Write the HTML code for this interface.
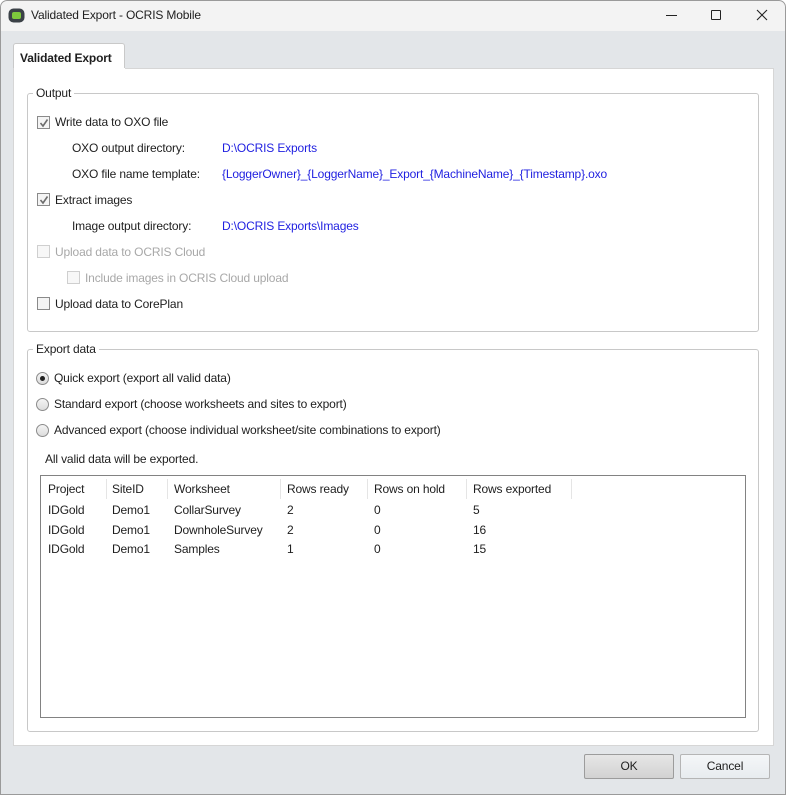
<!DOCTYPE html>
<html><head><style>
*{margin:0;padding:0;box-sizing:border-box}
body{width:786px;height:795px;background:#fff;font-family:"Liberation Sans",sans-serif;font-size:12px;letter-spacing:-0.15px;color:#1e1e1e;position:relative;overflow:hidden}
.a{position:absolute;white-space:nowrap}
.win{position:absolute;left:0;top:0;width:786px;height:795px;background:#e3e6e9;overflow:hidden;border-radius:7px 7px 0 0}
.frame{position:absolute;left:0;top:0;width:786px;height:795px;border:1px solid #9a9a9a;border-radius:7px 7px 0 0;pointer-events:none}
.title{position:absolute;left:0;top:0;width:786px;height:31px;background:#f3f3f3}
.cb{position:absolute;width:13px;height:13px;border:1px solid #8a8a8a;background:#f4f4f4}
.cb.dis{border-color:#cfcfcf;background:#f7f7f7}
.rb{position:absolute;width:13px;height:13px;border:1px solid #8c8c8c;border-radius:50%;background:linear-gradient(#f4f4f4,#dcdcdc)}
.grp{position:absolute;border:1px solid #c8c8c8;border-radius:3px}
.lg{position:absolute;background:#fff;padding:0 3px;color:#1e1e1e}
.blue{color:#1f1fe0}
.btn{position:absolute;height:25px;border:1px solid #b5b5b5;border-radius:2px;text-align:center;line-height:23px}
.sep{position:absolute;top:479px;width:1px;height:20px;background:#e5e5e5}
</style></head><body>
<div class="win">
<div class="title"></div>
<svg class="a" style="left:8px;top:7px" width="17" height="16"><rect x="0.5" y="1.5" width="16" height="14" rx="5" fill="#3b4147"/><rect x="4" y="5" width="9" height="7" rx="2" fill="#7ec83c"/></svg>
<div class="a" style="left:31px;top:8px">Validated Export - OCRIS Mobile</div>
<div class="a" style="left:666px;top:15px;width:11px;height:1px;background:#222"></div>
<div class="a" style="left:711px;top:10px;width:10px;height:10px;border:1px solid #222;border-radius:1px"></div>
<svg class="a" style="left:756px;top:9px" width="12" height="12"><path d="M1 1L11 11M11 1L1 11" stroke="#222" stroke-width="1.1"/></svg>

<div class="a" style="left:13px;top:43px;width:112px;height:27px;background:#fff;border:1px solid #c9c9c9;border-bottom:none;border-radius:3px 3px 0 0"></div>
<div class="a" style="left:20px;top:51px;font-weight:bold">Validated Export</div>
<div class="a" style="left:13px;top:68px;width:761px;height:678px;background:#fff;border:1px solid #d6d6d6;border-top:none"></div>
<div class="a" style="left:125px;top:68px;width:649px;height:1px;background:#d6d6d6"></div>

<div class="grp" style="left:27px;top:93px;width:732px;height:239px"></div>
<div class="lg" style="left:33px;top:86px">Output</div>
<div class="cb" style="left:37px;top:116px"></div><svg class="a" style="left:39px;top:118px" width="10" height="10"><path d="M1.5 5L4 8L8.5 1.5" stroke="#6c6c6c" stroke-width="1.6" fill="none"/></svg>
<div class="a" style="left:55px;top:115px">Write data to OXO file</div>
<div class="a" style="left:72px;top:141px">OXO output directory:</div>
<div class="a blue" style="left:222px;top:141px">D:\OCRIS Exports</div>
<div class="a" style="left:72px;top:167px">OXO file name template:</div>
<div class="a blue" style="left:222px;top:167px">{LoggerOwner}_{LoggerName}_Export_{MachineName}_{Timestamp}.oxo</div>
<div class="cb" style="left:37px;top:193px"></div><svg class="a" style="left:39px;top:195px" width="10" height="10"><path d="M1.5 5L4 8L8.5 1.5" stroke="#6c6c6c" stroke-width="1.6" fill="none"/></svg>
<div class="a" style="left:55px;top:193px">Extract images</div>
<div class="a" style="left:72px;top:219px">Image output directory:</div>
<div class="a blue" style="left:222px;top:219px">D:\OCRIS Exports\Images</div>
<div class="cb dis" style="left:37px;top:245px"></div>
<div class="a" style="left:55px;top:245px;color:#a8a8a8">Upload data to OCRIS Cloud</div>
<div class="cb dis" style="left:67px;top:271px"></div>
<div class="a" style="left:85px;top:271px;color:#a8a8a8">Include images in OCRIS Cloud upload</div>
<div class="cb" style="left:37px;top:297px"></div>
<div class="a" style="left:55px;top:297px">Upload data to CorePlan</div>

<div class="grp" style="left:27px;top:349px;width:732px;height:383px"></div>
<div class="lg" style="left:33px;top:342px">Export data</div>
<div class="rb" style="left:36px;top:372px"></div><div class="a" style="left:40px;top:376px;width:5px;height:5px;border-radius:50%;background:#222"></div>
<div class="a" style="left:54px;top:371px">Quick export (export all valid data)</div>
<div class="rb" style="left:36px;top:398px"></div>
<div class="a" style="left:54px;top:397px">Standard export (choose worksheets and sites to export)</div>
<div class="rb" style="left:36px;top:424px"></div>
<div class="a" style="left:54px;top:423px">Advanced export (choose individual worksheet/site combinations to export)</div>
<div class="a" style="left:45px;top:452px">All valid data will be exported.</div>

<div class="a" style="left:40px;top:475px;width:706px;height:243px;border:1px solid #828282"></div>
<div class="sep" style="left:106px"></div><div class="sep" style="left:167px"></div><div class="sep" style="left:280px"></div><div class="sep" style="left:367px"></div><div class="sep" style="left:466px"></div><div class="sep" style="left:571px"></div>
<div class="a" style="left:48px;top:482px">Project</div><div class="a" style="left:112px;top:482px">SiteID</div><div class="a" style="left:174px;top:482px">Worksheet</div><div class="a" style="left:287px;top:482px">Rows ready</div><div class="a" style="left:374px;top:482px">Rows on hold</div><div class="a" style="left:473px;top:482px">Rows exported</div>
<div class="a" style="left:48px;top:503px">IDGold</div><div class="a" style="left:112px;top:503px">Demo1</div><div class="a" style="left:174px;top:503px">CollarSurvey</div><div class="a" style="left:287px;top:503px">2</div><div class="a" style="left:374px;top:503px">0</div><div class="a" style="left:473px;top:503px">5</div>
<div class="a" style="left:48px;top:523px">IDGold</div><div class="a" style="left:112px;top:523px">Demo1</div><div class="a" style="left:174px;top:523px">DownholeSurvey</div><div class="a" style="left:287px;top:523px">2</div><div class="a" style="left:374px;top:523px">0</div><div class="a" style="left:473px;top:523px">16</div>
<div class="a" style="left:48px;top:542px">IDGold</div><div class="a" style="left:112px;top:542px">Demo1</div><div class="a" style="left:174px;top:542px">Samples</div><div class="a" style="left:287px;top:542px">1</div><div class="a" style="left:374px;top:542px">0</div><div class="a" style="left:473px;top:542px">15</div>

<div class="btn" style="left:584px;top:754px;width:90px;background:linear-gradient(#e6e6e6,#d2d2d2);border-color:#9c9c9c">OK</div>
<div class="btn" style="left:680px;top:754px;width:90px;background:linear-gradient(#f4f6f8,#e8ecef)">Cancel</div>
<div class="frame"></div>
</div>
</body></html>
